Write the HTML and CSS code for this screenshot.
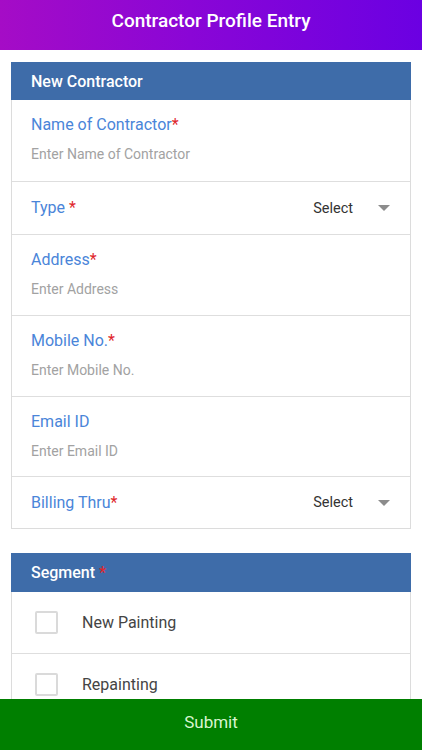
FILE: index.html
```html
<!DOCTYPE html>
<html>
<head>
<meta charset="utf-8">
<link rel="stylesheet" href="styles.css">
</head>
<body>
<header class="topbar">Contractor Profile Entry</header>
<main class="content">
  <section class="card">
    <div class="card-head">New Contractor</div>
    <div class="field">
      <div class="label">Name of Contractor<span class="req">*</span></div>
      <div class="ph">Enter Name of Contractor</div>
    </div>
    <div class="field select-row">
      <div class="label">Type <span class="req">*</span></div>
      <div class="select">Select<span class="caret"></span></div>
    </div>
    <div class="field">
      <div class="label">Address<span class="req">*</span></div>
      <div class="ph">Enter Address</div>
    </div>
    <div class="field">
      <div class="label">Mobile No.<span class="req">*</span></div>
      <div class="ph">Enter Mobile No.</div>
    </div>
    <div class="field short">
      <div class="label">Email ID</div>
      <div class="ph">Enter Email ID</div>
    </div>
    <div class="field select-row short">
      <div class="label">Billing Thru<span class="req">*</span></div>
      <div class="select">Select<span class="caret"></span></div>
    </div>
  </section>
  <section class="card seg">
    <div class="card-head">Segment <span class="req">*</span></div>
    <div class="check-row"><span class="box"></span>New Painting</div>
    <div class="check-row"><span class="box"></span>Repainting</div>
  </section>
</main>
<footer class="submit">Submit</footer>
</body>
</html>
```
FILE: styles.css
```css
* { box-sizing: border-box; }
html, body { margin: 0; padding: 0; }
body {
  font-family: Roboto, "Noto Sans", sans-serif;
  background: #fff;
  width: 422px;
  height: 750px;
  overflow: hidden;
  position: relative;
}
.topbar {
  height: 50px;
  background: linear-gradient(90deg, #a50cc6 0%, #8a06d6 45%, #6b00e2 100%);
  color: #fff;
  font-size: 19px;
  font-weight: 500;
  display: flex;
  align-items: center;
  justify-content: center;
  padding-bottom: 9px;
}
.content {
  padding: 12px 11px 0 11px;
}
.card {
  border: 1px solid #dcdcdc;
  border-top: none;
}
.card-head {
  background: #3e6ca9;
  color: #fff;
  font-size: 16px;
  font-weight: 500;
  height: 38px;
  display: flex;
  align-items: center;
  margin: 0 -1px;
  padding-left: 20px;
}
.card-head .req { color: #e0262b; margin-left: 4px; }
.field {
  height: 81px;
  padding: 15px 19px 0 19px;
  border-top: 1px solid #dedede;
}
.field.short { height: 80px; }
.card-head + .field { border-top: none; }
.label {
  color: #4a85d9;
  font-size: 16px;
  line-height: 20px;
}
.req { color: #e0262b; }
.ph {
  color: #a2a2a2;
  font-size: 14px;
  margin-top: 11px;
}
.select-row {
  height: 53px;
  padding-top: 0;
  display: flex;
  align-items: center;
  justify-content: space-between;
  padding-right: 20px;
}
.select-row.short { height: 52px; }
.select {
  color: #333;
  font-size: 14.5px;
  display: flex;
  align-items: center;
}
.caret {
  width: 0; height: 0;
  border-left: 6px solid transparent;
  border-right: 6px solid transparent;
  border-top: 6px solid #8c8c8c;
  margin-left: 25px;
}
.seg { margin-top: 24px; border-bottom: none; }
.seg .card-head { height: 39px; }
.check-row {
  height: 61px;
  display: flex;
  align-items: center;
  padding-left: 23px;
  font-size: 16px;
  color: #444;
  border-top: 1px solid #dedede;
}
.card-head + .check-row { border-top: none; }
.box {
  width: 23px; height: 23px;
  border: 2px solid #dadada;
  border-radius: 2px;
  margin-right: 24px;
}
.submit {
  position: absolute;
  left: 0; right: 0; bottom: 0;
  height: 51px;
  background: #007f00;
  color: #d8f5d0;
  font-size: 17px;
  display: flex;
  align-items: center;
  justify-content: center;
  padding-bottom: 5px;
}
```
